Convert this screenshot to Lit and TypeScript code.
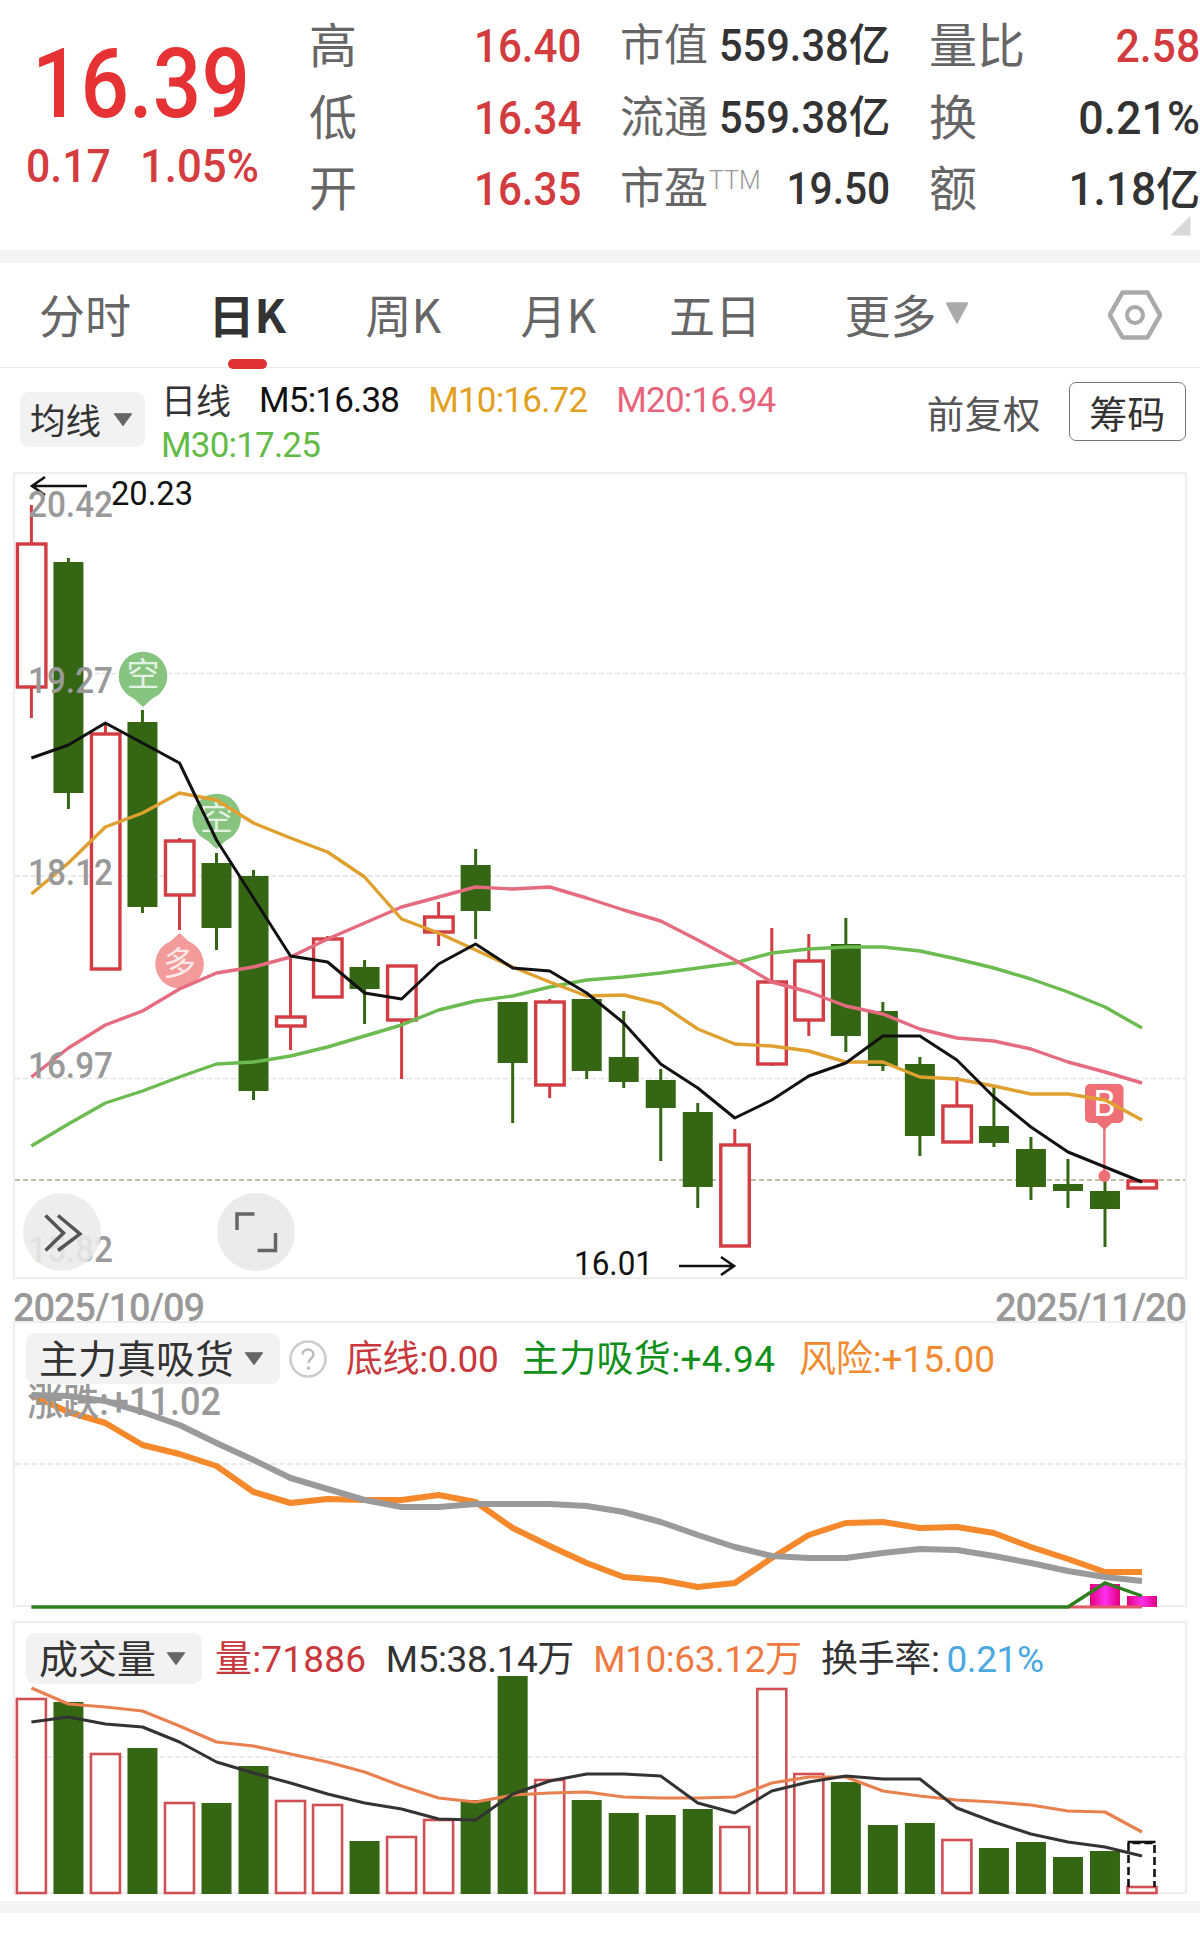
import { LitElement, html, css, svg } from "lit";
import { customElement } from "lit/decorators.js";

type C = [number, number, number, number, "r" | "g"];
const X = (i: number) => 31.4 + 37.02 * i;

const candles: C[] = [
  [505, 543, 687, 718, "r"], [558, 562, 793, 809, "g"], [723, 733, 969, 969, "r"], [710, 722, 907, 913, "g"],
  [838, 840, 895, 930, "r"], [853, 863, 928, 950, "g"], [870, 876, 1091, 1100, "g"], [955, 1016, 1026, 1050, "r"],
  [936, 938, 997, 998, "r"], [960, 967, 989, 1024, "g"], [965, 965, 1020, 1079, "r"], [902, 916, 932, 946, "r"],
  [849, 865, 911, 939, "g"], [1002, 1002, 1063, 1123, "g"], [999, 1001, 1085, 1098, "r"], [999, 999, 1071, 1079, "g"],
  [1011, 1057, 1082, 1088, "g"], [1069, 1080, 1108, 1161, "g"], [1103, 1112, 1187, 1208, "g"], [1129, 1144, 1246, 1246, "r"],
  [928, 981, 1064, 1066, "r"], [934, 960, 1020, 1036, "r"], [918, 944, 1036, 1052, "g"], [1002, 1011, 1066, 1071, "g"],
  [1057, 1064, 1136, 1156, "g"], [1077, 1105, 1142, 1142, "r"], [1087, 1126, 1143, 1147, "g"], [1137, 1149, 1187, 1200, "g"],
  [1159, 1184, 1191, 1208, "g"], [1177, 1191, 1209, 1247, "g"], [1180, 1180, 1188, 1188, "r"],
];
const m5 = [758, 745, 723, 743, 763, 840, 898, 956, 962, 993, 999, 964, 944, 968, 971, 993, 1023, 1064, 1088, 1118, 1100, 1076, 1063, 1036, 1036, 1060, 1097, 1127, 1152, 1167, 1182];
const m10 = [894, 863, 827, 813, 793, 800, 823, 838, 852, 877, 919, 933, 950, 967, 982, 996, 995, 1004, 1029, 1044, 1046, 1051, 1062, 1062, 1077, 1079, 1086, 1094, 1094, 1100, 1120];
const m20 = [1077, 1048, 1025, 1011, 989, 973, 967, 957, 939, 923, 907, 897, 887, 889, 887, 898, 910, 921, 940, 960, 982, 992, 1006, 1014, 1029, 1038, 1041, 1049, 1062, 1072, 1083];
const m30 = [1146, 1124, 1103, 1091, 1077, 1064, 1062, 1056, 1047, 1036, 1025, 1010, 1001, 996, 987, 980, 977, 973, 968, 963, 953, 949, 947, 947, 951, 959, 968, 979, 992, 1007, 1028];
const orange = [1395, 1412, 1423, 1445, 1454, 1466, 1492, 1503, 1499, 1500, 1500, 1495, 1502, 1528, 1546, 1563, 1577, 1580, 1587, 1583, 1558, 1535, 1523, 1522, 1528, 1527, 1533, 1547, 1559, 1572, 1572];
const grey = [1395, 1396, 1401, 1412, 1425, 1443, 1460, 1478, 1489, 1500, 1507, 1507, 1504, 1504, 1504, 1506, 1512, 1522, 1535, 1547, 1556, 1558, 1558, 1553, 1549, 1550, 1556, 1563, 1571, 1577, 1581];
const vol: [number, "r" | "g"][] = [
  [1699, "r"], [1702, "g"], [1754, "r"], [1748, "g"], [1803, "r"], [1803, "g"], [1766, "g"], [1801, "r"], [1805, "r"], [1841, "g"],
  [1837, "r"], [1820, "r"], [1800, "g"], [1676, "g"], [1780, "r"], [1800, "g"], [1813, "g"], [1815, "g"], [1809, "g"], [1827, "r"],
  [1689, "r"], [1774, "r"], [1782, "g"], [1825, "g"], [1823, "g"], [1840, "r"], [1848, "g"], [1842, "g"], [1857, "g"], [1851, "g"], [1887, "r"],
];
const v5 = [1722, 1717, 1724, 1727, 1742, 1762, 1773, 1783, 1794, 1803, 1809, 1819, 1820, 1794, 1781, 1774, 1774, 1776, 1803, 1813, 1791, 1782, 1776, 1779, 1779, 1808, 1822, 1834, 1842, 1847, 1856];
const v10 = [1688, 1704, 1707, 1711, 1726, 1742, 1746, 1754, 1762, 1772, 1786, 1798, 1802, 1795, 1793, 1792, 1797, 1798, 1798, 1797, 1783, 1777, 1777, 1791, 1796, 1800, 1802, 1805, 1811, 1812, 1832];

const pts = (a: number[]) => a.map((y, i) => `${X(i).toFixed(1)},${y}`).join(" ");
const line = (a: number[], color: string, w: number) =>
  svg`<polyline points=${pts(a)} fill="none" stroke=${color} stroke-width=${w} stroke-linejoin="round"/>`;
const grid = (y: number) => svg`<line x1="15" x2="1185" y1=${y} y2=${y} stroke="#e2e2e2" stroke-width="1.5" stroke-dasharray="5 3"/>`;
const label = (t: string, x: number, y: number, w: number, cls: string) =>
  svg`<text x=${x} y=${y} textLength=${w} lengthAdjust="spacingAndGlyphs" class=${cls}>${t}</text>`;

const candle = (c: C, i: number) => {
  const x = X(i);
  const [hi, top, bot, lo, k] = c;
  if (k === "g") {
    return svg`<line x1=${x} x2=${x} y1=${hi} y2=${lo} stroke="#346614" stroke-width="3"/>
      <rect x=${x - 15} y=${top} width="30" height=${bot - top} fill="#346614"/>`;
  }
  return svg`<line x1=${x} x2=${x} y1=${hi} y2=${lo} stroke="#d23c42" stroke-width="3"/>
    <rect x=${x - 14} y=${top + 1} width="28.5" height=${bot - top - 1} fill="#fff" stroke="#d23c42" stroke-width="3.4"/>`;
};
const bubbleDown = (x: number, cy: number, tip: number, ch: string, base: number, color: string) => svg`
  <circle cx=${x} cy=${cy} r="24.3" fill=${color}/>
  <polygon points="${x - 12},${cy + 20} ${x + 12},${cy + 20} ${x},${tip}" fill=${color}/>
  <text x=${x} y=${base} text-anchor="middle" class="bub">${ch}</text>`;

const Caret = (c: string, w: number, h: number) => html`<svg class="caret" width=${w} height=${h} viewBox="0 0 20 12" preserveAspectRatio="none">
  <path d="M1.5 0.8H18.5L10 11.4Z" fill=${c} stroke=${c} stroke-width="1.2" stroke-linejoin="round"/></svg>`;

@customElement("app-root")
export class AppRoot extends LitElement {
  static styles = css`
    :host { display: block; width: 1200px; height: 1946px; background: #fff; overflow: hidden;
      font-family: Roboto, "Noto Sans CJK SC", sans-serif; color: #333; }
    .header { position: relative; height: 250px; display: flex; }
    .quote { width: 311px; flex: none; display: flex; flex-direction: column; }
    .price { font-size: 96px; font-weight: 500; color: #e63234; line-height: 100px; height: 100px; margin: 34px 0 0 32px;
      transform: scaleX(.89); transform-origin: left center; width: 240px; }
    .change { display: flex; height: 50px; margin-top: 7px; font-size: 47px; font-weight: 500; line-height: 50px; color: #d53c40; }
    .change span { display: block; flex: none; transform-origin: left center; }
    .c1 { margin-left: 26px; width: 114px; transform: scaleX(.91); }
    .c2 { transform: scaleX(.93); }
    .stats { flex: 1; display: grid; grid-template-columns: 270px 268px 269px; column-gap: 41px;
      grid-auto-rows: 71.5px; padding-top: 11px; }
    .cell { display: flex; justify-content: space-between; align-items: center; white-space: nowrap; }
    .lab { font-family: "Noto Sans CJK SC", sans-serif; font-size: 44px; color: #666; line-height: 71px; margin: -8px 0 0 -2px; }
    .lab.big { font-size: 48px; }
    .lab sup { font-family: Roboto, sans-serif; font-weight: 300; font-size: 25px; color: #999; vertical-align: 15px; line-height: 0; margin-left: 1px; }
    .val { font-size: 46px; font-weight: 500; line-height: 71px; display: inline-block; transform-origin: right center; color: #333; }
    .val.s44 { font-size: 44px; }
    .red { color: #d23c3f; }
    .sx1 { transform: scaleX(.915); }
    .sx2 { transform: scaleX(.945); }
    .sx3 { transform: scaleX(.93); }
    .sx4 { transform: scaleX(.925); }
    .sx5 { transform: scaleX(.975); }
    .sx6 { transform: scaleX(.96); }
    .cornerTri { position: absolute; right: 9.5px; bottom: 14.5px; width: 20px; height: 20px; background: #d8d8d8; clip-path: polygon(100% 0, 100% 100%, 0 100%); }
    .band { height: 13px; background: #f4f4f4; }
    .tabs { height: 104px; border-bottom: 1px solid #e8e8e8; display: grid;
      grid-template-columns: 169.5px 157px 155px 148.5px 175.5px 1fr auto; align-items: center; padding: 0 38px 0 39px;
      font-family: "Noto Sans CJK SC", sans-serif; font-size: 46px; color: #666; }
    .tab { position: relative; line-height: 104px; height: 104px; display: flex; align-items: center; margin-top: -5px; }
    .tab.on { font-weight: 700; color: #333; }
    .tab.on::after { content: ""; position: absolute; left: 19.5px; bottom: -4px; width: 39px; height: 10px; border-radius: 5px; background: #e03034; }
    .tab .caret { margin-left: 8px; margin-top: 1px; }
    .gear { display: block; }
    .toolbar { height: 104px; display: flex; align-items: flex-start; padding: 0 14.5px 0 20px; }
    .chip { flex: none; display: flex; align-items: center; background: #f2f2f2; border-radius: 9px; box-sizing: border-box; font-family: "Noto Sans CJK SC", sans-serif; color: #333; }
    .chipMa { width: 125px; height: 55px; margin-top: 24px; padding: 0 0 3px 10px; font-size: 35.5px; }
    .chipMa .caret { margin: 3px 0 0 12px; }
    .legend { width: 640px; margin: 10px 0 0 16px; display: flex; flex-wrap: wrap; column-gap: 29px; font-size: 35px; line-height: 45px; letter-spacing: -.8px; white-space: nowrap; }
    .legend .d { font-family: "Noto Sans CJK SC", sans-serif; font-size: 35px; letter-spacing: 0; margin: -2px 0 0 0; width: 69px; height: 45px; }
    .k { color: #111; } .o { color: #e2a020; } .p { color: #e8647c; } .g { color: #62bb46; }
    .right { margin: 14px 0 0 auto; display: flex; align-items: center; gap: 28px; }
    .fq { font-family: "Noto Sans CJK SC", sans-serif; font-size: 37.5px; letter-spacing: .6px; color: #555; }
    .btn { width: 116.5px; height: 59px; box-sizing: border-box; border: 1.5px solid #777; border-radius: 7px; display: flex; align-items: center; justify-content: center; font-family: "Noto Sans CJK SC", sans-serif; font-size: 38px; color: #333; }
    svg.chart { display: block; }
    svg text { font-family: Roboto, "Noto Sans CJK SC", sans-serif; }
    .ax { font-size: 36.5px; font-weight: 500; fill: #999; }
    .blk { font-size: 34px; fill: #111; }
    .bub { font-family: "Noto Sans CJK SC", sans-serif !important; font-size: 33px; fill: #fff; fill-opacity: .8; }
    .bb { font-size: 36px; fill: #fff; }
    .ax2 { font-size: 38px; font-weight: 500; fill: #999; }
    .dates { height: 42px; box-sizing: border-box; padding: 16px 14px 0 13px; display: flex; justify-content: space-between; align-items: center; font-size: 38px; font-weight: 500; color: #999; letter-spacing: -1.15px; }
    .panel { position: relative; }
    .ph { position: absolute; left: 26px; top: 12px; display: flex; align-items: center; font-size: 37px; white-space: nowrap; letter-spacing: -.4px; font-family: Roboto, "Noto Sans CJK SC", sans-serif; }
    .chipA { width: 254px; height: 51px; padding: 0 0 5px 13px; font-size: 39px; letter-spacing: 0; }
    .chipA .caret { margin: 5px 0 0 10px; }
    .chipB { width: 176px; height: 51px; padding: 0 0 5px 13px; font-size: 39px; letter-spacing: 0; }
    .chipB .caret { margin: 5px 0 0 10px; }
    .help { margin: 0 19px 0 9px; display: block; }
    .items { display: flex; gap: 23.5px; margin-top: -5px; }
    .items2 { display: flex; gap: 19.5px; margin: -5px 0 0 13px; }
    .items2 span { display: block; }
    .ls1 { letter-spacing: .2px; }
    .ls2 { letter-spacing: -.45px; }
    .ls3 { letter-spacing: .35px; }
    .ls4 { letter-spacing: -.1px; }
    .rd { color: #c8383c; } .gn { color: #109018; } .or { color: #f08a30; } .or2 { color: #ee7a42; } .dk { color: #333; }
    .items2 .bl { display: inline; color: #4aa8e0; margin-left: 7px; }
    .tail { height: 12px; background: #f4f4f4; }
  `;

  private chart1() {
    return svg`
      <rect x="14" y="473" width="1172" height="805" fill="#fff" stroke="#eee" stroke-width="2"/>
      ${grid(673.5)}${grid(876)}${grid(1078.5)}
      <line x1="15" x2="1185" y1="1180" y2="1180" stroke="#b5a88a" stroke-width="1.6" stroke-dasharray="5 3"/>
      ${candles.map(candle)}
      ${bubbleDown(143, 676, 707, "空", 686, "#86c47f")}
      ${bubbleDown(216.6, 818, 849, "空", 830, "#86c47f")}
      <circle cx="179.5" cy="964" r="24.3" fill="#f39a9a"/>
      <polygon points="167.5,944 191.5,944 179.5,933" fill="#f39a9a"/>
      <text x="179.5" y="975" text-anchor="middle" class="bub">多</text>
      <line x1="1104.4" x2="1104.4" y1="1125" y2="1176" stroke="#ee7076" stroke-width="2.5"/>
      <circle cx="1104.4" cy="1176" r="6" fill="#ee7076"/>
      <rect x="1085" y="1084" width="38.5" height="39" rx="5" fill="#ee7076"/>
      <polygon points="1096,1122 1113,1122 1104.4,1130" fill="#ee7076"/>
      <text x="1104.4" y="1116" text-anchor="middle" class="bb">B</text>
      ${line(m30, "#6cbb50", 3.4)}${line(m20, "#e56b80", 3.4)}${line(m10, "#e0a030", 3.4)}${line(m5, "#111", 3)}
      <path d="M87 486H32M45 477L32 486L45 495" fill="none" stroke="#111" stroke-width="2.6"/>
      ${label("20.23", 111, 505, 82, "blk")}
      ${label("16.01", 574, 1275, 79, "blk")}
      <path d="M679 1266H734M721 1257L734 1266L721 1275" fill="none" stroke="#111" stroke-width="2.6"/>
      ${label("20.42", 28, 517, 85, "ax")}${label("19.27", 28, 693, 85, "ax")}${label("18.12", 28, 885, 85, "ax")}
      ${label("16.97", 28, 1078, 85, "ax")}${label("15.82", 28, 1262, 85, "ax")}
      <circle cx="62" cy="1232" r="39" fill="#ebebeb" fill-opacity=".88"/>
      <circle cx="256" cy="1232" r="39" fill="#ebebeb"/>
      <path d="M45.5 1215.5L63.5 1233L45.5 1250.5M58 1215.5L80 1234L58 1250.5" fill="none" stroke="#555" stroke-width="3.5"/>
      <path d="M237 1230V1214H254.5M257.5 1250.5H275.5V1233" fill="none" stroke="#666" stroke-width="3.5"/>
    `;
  }

  private chart2() {
    const bar = (i: number, top: number) => svg`<rect x=${X(i) - 15} y=${top} width="30" height=${1607 - top} fill="url(#mag)"/>`;
    return svg`
      <defs><linearGradient id="mag" x1="0" x2="1" y1="0" y2="0">
        <stop offset="0" stop-color="#e0007a"/><stop offset=".5" stop-color="#ff30f0"/><stop offset="1" stop-color="#e0007a"/>
      </linearGradient></defs>
      <rect x="14" y="1322" width="1172" height="284" fill="#fff" stroke="#eee" stroke-width="2"/>
      ${grid(1464)}
      ${bar(29, 1584)}${bar(30, 1596)}
      <line x1=${X(28)} x2=${X(30)} y1="1607" y2="1607" stroke="#e05a66" stroke-width="3"/>
      ${line(orange, "#f5882a", 6)}${line(grey, "#9a9a9a", 6)}
      <polyline points="${X(0)},1607 ${X(28)},1607 ${X(29)},1583 ${X(30)},1596" fill="none" stroke="#2e7d1e" stroke-width="3.4"/>
      ${label("涨跌:+11.02", 27, 1415, 194, "ax2")}
    `;
  }

  private chart3() {
    return svg`
      <rect x="14" y="1622" width="1172" height="271" fill="#fff" stroke="#eee" stroke-width="2"/>
      ${grid(1757)}
      ${vol.map(([t, k], i) => k === "g"
        ? svg`<rect x=${X(i) - 15} y=${t} width="30" height=${1894 - t} fill="#346614"/>`
        : svg`<rect x=${X(i) - 14.5} y=${t} width="29" height=${1893 - t} fill="#fff" stroke="#cf5055" stroke-width="2.6"/>`)}
      <path d="M1128.5 1887V1843H1154.5V1887" fill="none" stroke="#111" stroke-width="2.6" stroke-dasharray="8 4"/>
      <line x1="1127.5" x2="1155.5" y1="1842" y2="1842" stroke="#111" stroke-width="2.6"/>
      ${line(v10, "#e8814f", 3.2)}${line(v5, "#333", 3)}
    `;
  }

  render() {
    return html`
      <div class="header">
        <div class="quote">
          <div class="price">16.39</div>
          <div class="change"><span class="c1">0.17</span><span class="c2">1.05%</span></div>
        </div>
        <div class="stats">
          <div class="cell"><span class="lab big">高</span><span class="val red sx1">16.40</span></div>
          <div class="cell"><span class="lab">市值</span><span class="val s44 sx2">559.38亿</span></div>
          <div class="cell"><span class="lab big">量比</span><span class="val red sx3">2.58</span></div>
          <div class="cell"><span class="lab big">低</span><span class="val red sx1">16.34</span></div>
          <div class="cell"><span class="lab">流通</span><span class="val s44 sx2">559.38亿</span></div>
          <div class="cell"><span class="lab big">换</span><span class="val sx5">0.21%</span></div>
          <div class="cell"><span class="lab big">开</span><span class="val red sx1">16.35</span></div>
          <div class="cell"><span class="lab">市盈<sup>TTM</sup></span><span class="val s44 sx4">19.50</span></div>
          <div class="cell"><span class="lab big">额</span><span class="val sx6">1.18亿</span></div>
        </div>
        <div class="cornerTri"></div>
      </div>
      <div class="band"></div>
      <div class="tabs">
        <div class="tab">分时</div>
        <div class="tab on">日K</div>
        <div class="tab">周K</div>
        <div class="tab">月K</div>
        <div class="tab">五日</div>
        <div class="tab">更多${Caret("#aaa", 24, 22)}</div>
        <svg class="gear" width="54" height="50" viewBox="0 0 54 50">
          <path d="M1.8 25L14.5 2.5H39.5L52.2 25L39.5 47.5H14.5Z" fill="none" stroke="#aaa" stroke-width="4.5" stroke-linejoin="round"/>
          <circle cx="27" cy="25" r="8" fill="none" stroke="#aaa" stroke-width="4"/>
        </svg>
      </div>
      <div class="toolbar">
        <div class="chip chipMa">均线${Caret("#666", 20, 13)}</div>
        <div class="legend">
          <span class="d">日线</span>
          <span class="k">M5:16.38</span>
          <span class="o">M10:16.72</span>
          <span class="p">M20:16.94</span>
          <span class="g">M30:17.25</span>
        </div>
        <div class="right"><span class="fq">前复权</span><div class="btn">筹码</div></div>
      </div>
      <svg class="chart" width="1200" height="807" viewBox="0 472 1200 807">${this.chart1()}</svg>
      <div class="dates"><span>2025/10/09</span><span>2025/11/20</span></div>
      <div class="panel">
        <svg class="chart" width="1200" height="300" viewBox="0 1321 1200 300">${this.chart2()}</svg>
        <div class="ph">
          <div class="chip chipA">主力真吸货${Caret("#666", 20, 13)}</div>
          <svg class="help" width="38" height="38" viewBox="0 0 38 38">
            <circle cx="19" cy="19" r="17.5" fill="none" stroke="#ccc" stroke-width="2.6"/>
            <path d="M13.5 14.5C13.5 11.5 16 9.5 19 9.5C22 9.5 24.5 11.5 24.5 14.5C24.5 18.5 19.5 18.5 19.5 23" fill="none" stroke="#bbb" stroke-width="2.4"/>
            <circle cx="19.5" cy="28" r="1.7" fill="#bbb"/>
          </svg>
          <div class="items">
            <span class="rd">底线:0.00</span>
            <span class="gn ls3">主力吸货:+4.94</span>
            <span class="or ls4">风险:+15.00</span>
          </div>
        </div>
      </div>
      <div class="panel">
        <svg class="chart" width="1200" height="280" viewBox="0 1621 1200 280">${this.chart3()}</svg>
        <div class="ph">
          <div class="chip chipB">成交量${Caret("#666", 20, 13)}</div>
          <div class="items2">
            <span class="rd ls1">量:71886</span>
            <span class="dk ls2">M5:38.14万</span>
            <span class="or2 ls2">M10:63.12万</span>
            <span class="dk">换手率:<span class="bl">0.21%</span></span>
          </div>
        </div>
      </div>
      <div class="tail"></div>
    `;
  }
}
